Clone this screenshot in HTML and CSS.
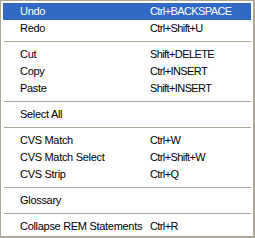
FILE: index.html
```html
<!DOCTYPE html>
<html lang="en">
<head>
    <meta charset="UTF-8">
    <title>Edit menu</title>
    <link rel="stylesheet" href="styles.css">
</head>
<body>

    <div class="menu">
        <div class="item active"><span class="label">Undo</span><span class="key">Ctrl+BACKSPACE</span></div>
        <div class="item"><span class="label">Redo</span><span class="key">Ctrl+Shift+U</span></div>
        <div class="sep"></div>
        <div class="item"><span class="label">Cut</span><span class="key">Shift+DELETE</span></div>
        <div class="item"><span class="label">Copy</span><span class="key">Ctrl+INSERT</span></div>
        <div class="item"><span class="label">Paste</span><span class="key">Shift+INSERT</span></div>
        <div class="sep"></div>
        <div class="item"><span class="label">Select All</span><span class="key"></span></div>
        <div class="sep"></div>
        <div class="item"><span class="label">CVS Match</span><span class="key">Ctrl+W</span></div>
        <div class="item"><span class="label">CVS Match Select</span><span class="key">Ctrl+Shift+W</span></div>
        <div class="item"><span class="label">CVS Strip</span><span class="key">Ctrl+Q</span></div>
        <div class="sep"></div>
        <div class="item"><span class="label">Glossary</span><span class="key"></span></div>
        <div class="sep"></div>
        <div class="item"><span class="label">Collapse REM Statements</span><span class="key">Ctrl+R</span></div>
    </div>

</body>
</html>
```

FILE: styles.css
```css
/* page */
body {
    margin: 0;
    background: #fff;
    font-family: "Liberation Sans", Arial, sans-serif;
    font-size: 11px;
}

/* menu box */
.menu {
    width: 248px;
    padding: 2px 2px 1px 2px;
    background: #fff;
    border: 1px solid #aca899;
    border-right-width: 2px;
    border-bottom-width: 2px;
}

/* menu row */
.item {
    display: grid;
    grid-template-columns: 130px 1fr;
    height: 17px;
    line-height: 17px;
    padding-left: 17px;
    color: #000;
    letter-spacing: -0.3px;
    white-space: nowrap;
}

/* shortcut text, caps run narrower */
.key {
    letter-spacing: -0.6px;
}

/* highlighted row */
.item.active {
    background-color: #316ac5;
    color: #fff;
}

/* separator line */
.sep {
    height: 1px;
    margin: 4px 0 4px 1px;
    background-color: #aca899;
}
```
